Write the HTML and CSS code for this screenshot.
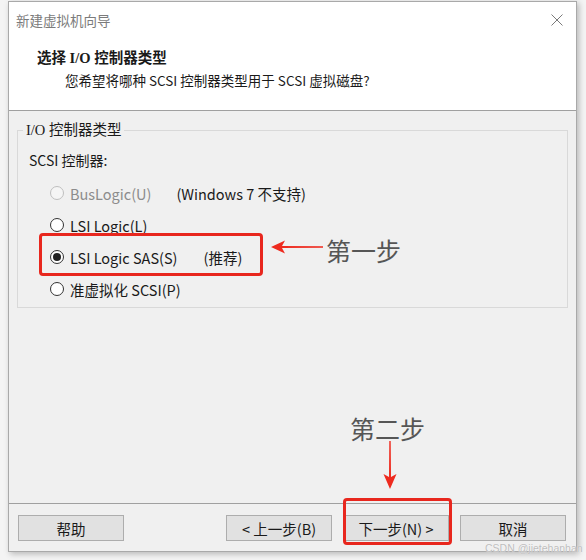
FILE: index.html
```html
<!DOCTYPE html>
<html lang="zh-CN">
<head>
    <meta charset="UTF-8">
    <meta name="viewport" content="width=device-width, initial-scale=1.0">
    <title>新建虚拟机向导</title>
    <link rel="stylesheet" href="styles.css">
</head>
<body>
    <div class="window">
        <div class="header">
            <div class="titlebar">
                <span class="title">新建虚拟机向导</span>
                <svg class="close" width="12" height="12" viewBox="0 0 12 12">
                    <path d="M0.5 0.5 L11.5 11.5 M11.5 0.5 L0.5 11.5" stroke="#7a7a7a" stroke-width="1" fill="none"/>
                </svg>
            </div>
            <h1 class="heading">选择 I/O 控制器类型</h1>
            <p class="subtitle">您希望将哪种 SCSI 控制器类型用于 SCSI 虚拟磁盘?</p>
        </div>

        <div class="body">
            <fieldset class="group">
                <legend>I/O 控制器类型</legend>
                <div class="group-label">SCSI 控制器:</div>
                <div class="radio-row disabled">
                    <span class="radio"></span>
                    <span class="radio-text">BusLogic(U)</span>
                    <span class="note">(Windows 7 不支持)</span>
                </div>
                <div class="radio-row">
                    <span class="radio"></span>
                    <span class="radio-text">LSI Logic(L)</span>
                </div>
                <div class="radio-row">
                    <span class="radio checked"></span>
                    <span class="radio-text">LSI Logic SAS(S)</span>
                    <span class="note note-rec">(推荐)</span>
                </div>
                <div class="radio-row">
                    <span class="radio"></span>
                    <span class="radio-text">准虚拟化 SCSI(P)</span>
                </div>
            </fieldset>

            <div class="footer">
                <button class="btn">帮助</button>
                <div class="nav-buttons">
                    <button class="btn">&lt; 上一步(B)</button>
                    <button class="btn">下一步(N) &gt;</button>
                    <button class="btn">取消</button>
                </div>
            </div>
        </div>

        <!-- 标注 -->
        <div class="mark mark-one"></div>
        <svg class="arrow-left" width="54" height="14" viewBox="0 0 54 14">
            <path d="M1 7 L15 0.5 L12 6 L53 6.3 L53 7.7 L12 8 L15 13.5 Z" fill="#ee2a1e"/>
        </svg>
        <div class="step step-one">第一步</div>

        <div class="step step-two">第二步</div>
        <svg class="arrow-down" width="14" height="50" viewBox="0 0 14 50">
            <path d="M7 49 L0.5 34 L6 37 L6.3 1 L7.7 1 L8 37 L13.5 34 Z" fill="#ee2a1e"/>
        </svg>
        <div class="mark mark-two"></div>
    </div>

    <div class="watermark">CSDN @jietehanhan</div>
</body>
</html>
```

FILE: styles.css
```css
body {
    margin: 0;
    width: 586px;
    height: 560px;
    position: relative;
    overflow: hidden;
    background-color: #f4f4f4;
    font-family: "Noto Sans CJK SC", sans-serif;
    font-size: 14px;
    color: #1a1a1a;
}
.window {
    position: relative;
    margin: 1px 0 0 8px;
    width: 567px;
    height: 549px;
    border: 1px solid #a9a9a9;
    background-color: #f0f0f0;
    box-shadow: 2px 2px 6px rgba(0,0,0,0.25);
    display: flex;
    flex-direction: column;
}
.header {
    background-color: #fff;
    border-bottom: 1px solid #a0a0a0;
    height: 108px;
}
.titlebar {
    height: 36px;
    display: flex;
    align-items: center;
    justify-content: space-between;
    padding: 0 13px 0 7px;
}
.title {
    color: #7b7b7b;
    font-size: 13.5px;
    line-height: 20px;
}
.heading {
    margin: 10px 0 0 28px;
    font-family: "Liberation Serif", "Noto Sans CJK SC", serif;
    font-size: 14.5px;
    font-weight: bold;
    line-height: 20px;
}
.subtitle {
    margin: 2px 0 0 56px;
    font-size: 13.5px;
    line-height: 20px;
}
.body {
    flex: 1;
    display: flex;
    flex-direction: column;
}
.group {
    margin: 10px 8px 0 8px;
    padding: 0 11px 2px 11px;
    border: 1px solid #d9d9d9;
    min-width: 0;
}
.group legend {
    margin-left: -6px;
    padding: 0 3px;
    font-family: "Liberation Serif", "Noto Sans CJK SC", serif;
    font-size: 14.5px;
    line-height: 18px;
}
.group-label {
    margin-top: 11px;
    line-height: 20px;
    margin-bottom: 7px;
}
.radio-row {
    height: 32px;
    display: flex;
    align-items: center;
    padding-left: 21px;
    font-size: 14.5px;
}
.radio {
    width: 12px;
    height: 12px;
    border: 1px solid #333;
    border-radius: 50%;
    background-color: #fff;
    margin-right: 6px;
    display: flex;
    align-items: center;
    justify-content: center;
}
.radio.checked::after {
    content: "";
    width: 8px;
    height: 8px;
    border-radius: 50%;
    background-color: #222;
}
.disabled .radio {
    border-color: #bfbfbf;
    background-color: #f5f5f5;
}
.disabled .radio-text {
    color: #8c8c8c;
}
.note {
    margin-left: 25px;
}
.note-rec {
    margin-left: 26px;
}
.footer {
    margin-top: auto;
    border-top: 1px solid #a0a0a0;
    padding: 11px 10px 10px 9px;
    display: flex;
}
.nav-buttons {
    margin-left: auto;
    display: flex;
    gap: 11px;
}
.btn {
    width: 106px;
    height: 26px;
    padding: 0;
    border: 1px solid #adadad;
    background-color: #e1e1e1;
    font-family: "Noto Sans CJK SC", sans-serif;
    font-size: 14.5px;
    color: #1a1a1a;
}
.mark {
    position: absolute;
    border: 3px solid #e8271e;
    border-radius: 4px;
    box-sizing: border-box;
}
.mark-one {
    left: 30px;
    top: 231px;
    width: 224px;
    height: 43px;
}
.mark-two {
    left: 334px;
    top: 496px;
    width: 109px;
    height: 47px;
}
.arrow-left {
    position: absolute;
    left: 261px;
    top: 238px;
}
.arrow-down {
    position: absolute;
    left: 374px;
    top: 438px;
}
.step {
    position: absolute;
    font-size: 25px;
    line-height: 30px;
    color: #565656;
}
.step-one {
    left: 317px;
    top: 233px;
}
.step-two {
    left: 341px;
    top: 411px;
}
.watermark {
    position: absolute;
    left: 485px;
    top: 541px;
    font-family: "Liberation Sans", sans-serif;
    font-size: 10.5px;
    line-height: 14px;
    color: #bdbdbd;
    text-shadow: 0 0 1px #fff;
}
```
